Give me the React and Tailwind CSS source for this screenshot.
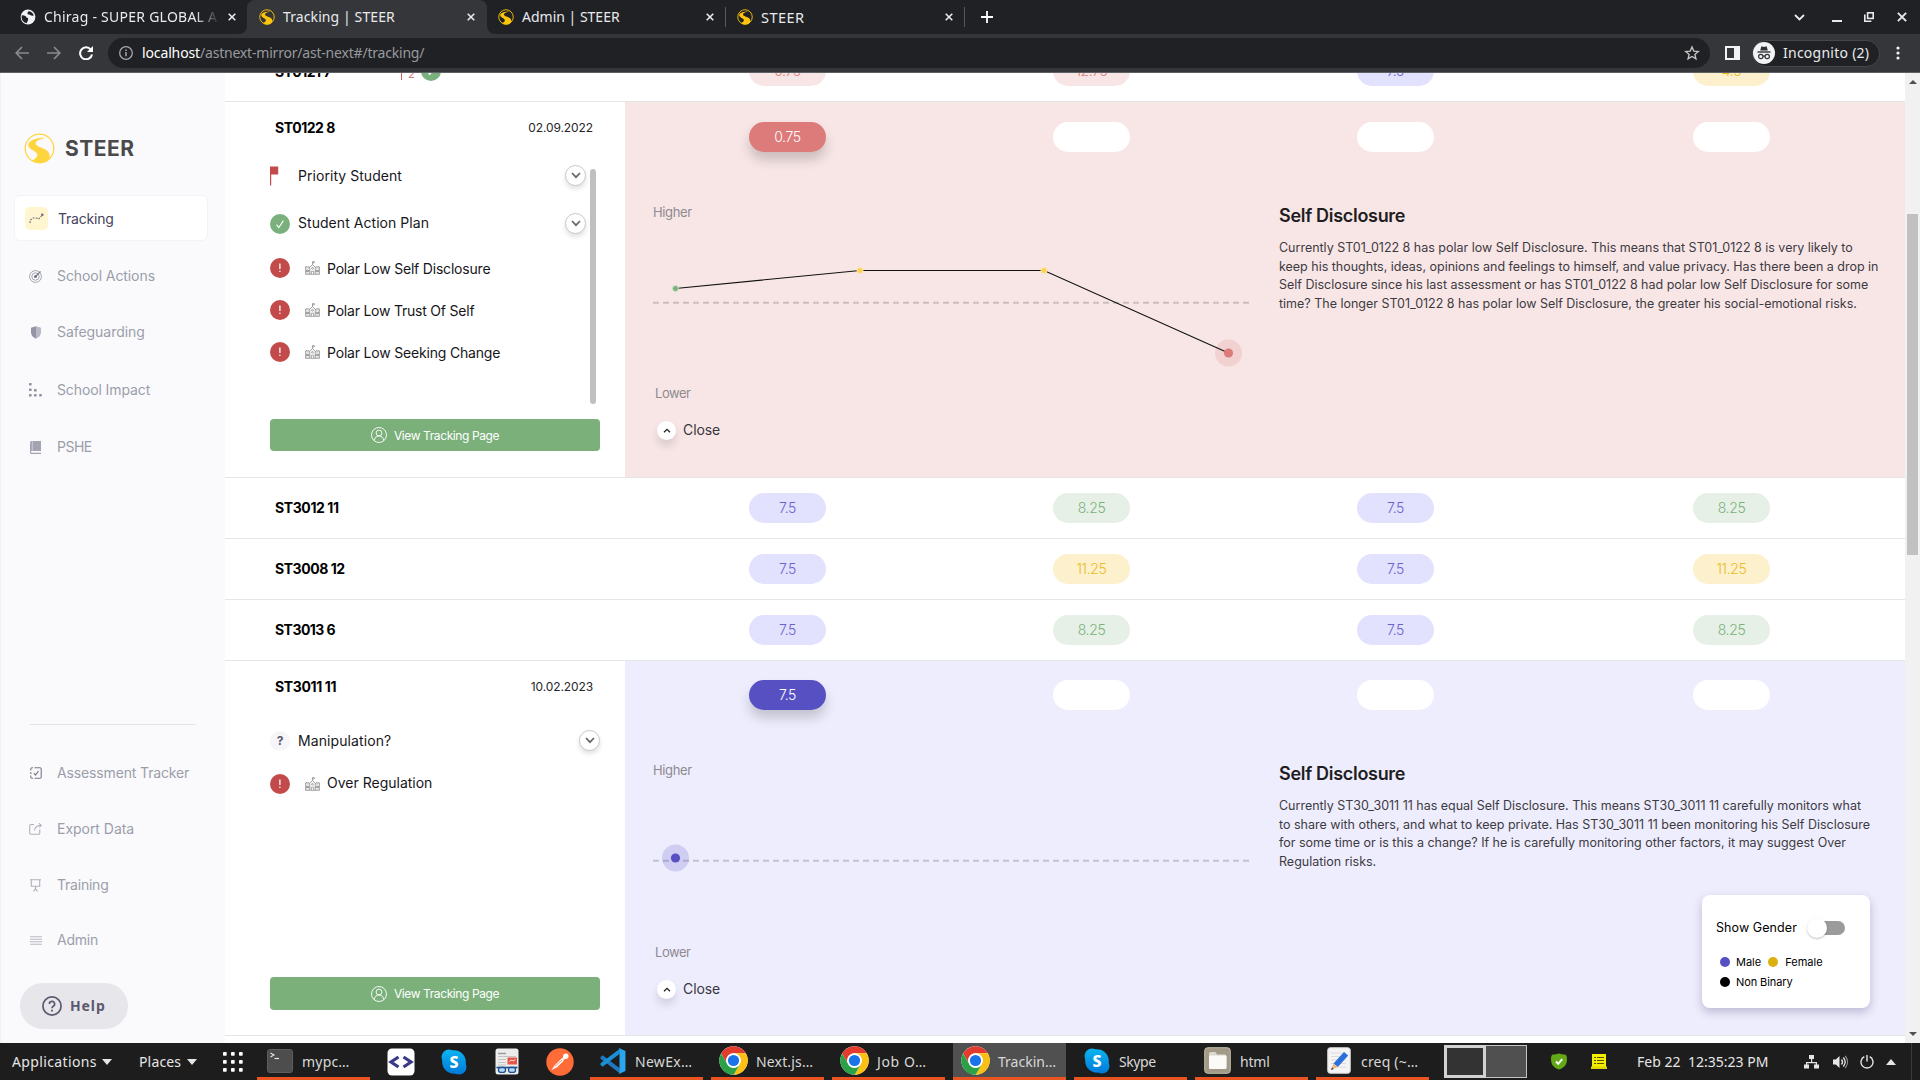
import React from "react";

/* ---------- Icons ---------- */

function SteerLogo({ size, color, stroke }) {
  return (
    <svg width={size} height={size} viewBox="0 0 32 32" className="shrink-0">
      <circle cx="16" cy="16" r={15.4 - stroke / 2} fill="none" stroke={color} strokeWidth={stroke} />
      <path
        d="M22.500 5C15 4.800 6.500 6.800 4.600 11.200C3.400 15 7.500 17 11 19C15.600 21.800 14.500 25 8 28.400C12.500 31.600 19.500 31.800 24 29.200C28 25.500 27.400 20 22 17C17.500 14.600 11.400 13.600 12 10.400C12.600 7.600 17.500 6.200 22.500 5Z"
        fill={color}
      />
    </svg>
  );
}

const X = ({ size = 8, w = 1.6 }) => (
  <svg width={size} height={size} viewBox="0 0 8 8" className="shrink-0" stroke="#e8eaed" strokeWidth={w}>
    <path d="M.7.7l6.600 6.600M7.300.7L.7 7.300" />
  </svg>
);

const GlobeIcon = () => (
  <svg width="16" height="16" viewBox="0 0 16 16" className="shrink-0">
    <circle cx="8" cy="8" r="7.400" fill="#f1f3f4" />
    <path d="M1.800 6.200C4.500 6 6.600 7 6.400 8.600c1.600.2 2.200 1.200 1.600 2.600L6.600 14.200C3 13.400 1 10 1.800 6.200zM8.400 2.200c2.800.2 4.600 1.600 5.400 4.200-2 .8-3.400.2-4-.8-1 .2-2.600-.4-2.400-1.600z" fill="#202124" />
  </svg>
);

const StarIcon = () => (
  <svg width="16" height="16" viewBox="0 0 24 24" fill="none" stroke="#c4c7c5" strokeWidth="2" className="ml-auto">
    <path d="M12 3l2.700 6.200 6.700.6-5.100 4.400 1.600 6.600-5.900-3.600-5.900 3.600 1.600-6.600L2.600 9.800l6.700-.6z" />
  </svg>
);

const Chrome = () => (
  <svg width="29" height="29" viewBox="0 0 48 48">
    <circle cx="24" cy="24" r="23.500" fill="#fff" />
    <path d="M24 12h20.350A23.500 23.500 0 0 0 3.650 12.250L13.600 30A12 12 0 0 1 24 12z" fill="#e33b2e" />
    <path d="M34.400 30L24.300 47.500A23.500 23.500 0 0 0 44.350 12H24a12 12 0 0 1 10.400 18z" fill="#fcc015" />
    <path d="M13.600 30L3.650 12.250A23.500 23.500 0 0 0 24.300 47.500L34.400 30a12 12 0 0 1-20.800 0z" fill="#2aa147" />
    <circle cx="24" cy="24" r="11.800" fill="#fff" />
    <circle cx="24" cy="24" r="9.300" fill="#1a73e8" />
  </svg>
);

const Skype = () => (
  <svg width="26" height="26" viewBox="0 0 26 26">
    <defs>
      <linearGradient id="sky" x1="0" y1="0" x2="0" y2="26" gradientUnits="userSpaceOnUse">
        <stop offset="0" stopColor="#0cb6f2" />
        <stop offset="1" stopColor="#0078d7" />
      </linearGradient>
    </defs>
    <g fill="url(#sky)">
      <circle cx="8" cy="8" r="7.500" />
      <circle cx="18" cy="18" r="7.500" />
      <circle cx="13" cy="13" r="11.800" />
    </g>
    <text x="13" y="18.800" textAnchor="middle" fontFamily="Noto Sans, sans-serif" fontWeight="800" fontSize="16" fill="#fff">S</text>
  </svg>
);

const VSCode = () => (
  <svg width="26" height="26" viewBox="0 0 100 100">
    <path d="M2 35l8-7 66 50v19L2 41z" fill="#2079c0" />
    <path d="M2 65l8 7 66-50V3L2 59z" fill="#1b8fd6" />
    <path d="M75 1l23 11v76L75 99c-2 0-4-1-5-3 3 2 5 0 5-3V7c0-3-2-5-5-3 1-2 3-3 5-3z" fill="#2aa5ee" />
  </svg>
);

const TermIcon = () => (
  <svg width="26" height="24" viewBox="0 0 26 24">
    <rect x=".5" y=".5" width="25" height="23" rx="2.500" fill="#4d4d4d" stroke="#5e5e5e" />
    <path d="M3.500 4l3.500 2-3.500 2" fill="none" stroke="#e8e8e8" strokeWidth="1.100" />
    <path d="M7.500 9.500h4.500" stroke="#e8e8e8" strokeWidth="1.200" />
  </svg>
);

const CodeIcon = () => (
  <svg width="28" height="28" viewBox="0 0 28 28">
    <rect x=".5" y=".5" width="27" height="27" rx="4.500" fill="#fff" />
    <path d="M11.500 9L4 14l7.500 5M16.500 9L24 14l-7.500 5" fill="none" stroke="#3b3a86" strokeWidth="3.200" />
  </svg>
);

const DocIcon = () => (
  <svg width="24" height="27" viewBox="0 0 24 27">
    <rect x=".5" y=".5" width="23" height="26" rx="2.500" fill="#ececec" />
    <path d="M3 5.500h8" stroke="#999" strokeWidth="1.400" />
    <path d="M3 8.500h18M3 11.500h8M3 14.500h8M3 17h8" stroke="#c4c4c4" strokeWidth="1" />
    <rect x="12.500" y="9.500" width="9.500" height="7" fill="#e95448" />
    <path d="M14.500 13.500c2-3 4 1 5.500-2" fill="none" stroke="#fff" strokeWidth="1" />
    <path d="M1.500 19.500h21" stroke="#1d4f8c" strokeWidth="1.600" />
    <rect x="3.500" y="19.500" width="7" height="4.800" rx="2" fill="#b9d7f2" stroke="#1d4f8c" strokeWidth="1.300" />
    <rect x="13.500" y="19.500" width="7" height="4.800" rx="2" fill="#b9d7f2" stroke="#1d4f8c" strokeWidth="1.300" />
  </svg>
);

const Postman = () => (
  <svg width="28" height="28" viewBox="0 0 28 28">
    <circle cx="14" cy="14" r="13.700" fill="#ff6c37" />
    <path d="M5.500 22l3-4.500 7-7 2.300 2.200-6.800 6.500z" fill="#fff" />
    <circle cx="19.800" cy="8.200" r="2.700" fill="#fff" />
    <path d="M16 12l2.500-2.500" stroke="#fff" strokeWidth="2.200" />
    <path d="M9 18.500l7-6.500" stroke="#ff6c37" strokeWidth=".7" />
  </svg>
);

const FolderIcon = () => (
  <svg width="27" height="27" viewBox="0 0 27 27">
    <rect x=".7" y=".7" width="25.600" height="25.600" rx="3" fill="#a29a86" stroke="#c3bca9" />
    <path d="M5 6.500a1.500 1.500 0 0 1 1.500-1.500h5l1.500 2.500h8a1.500 1.500 0 0 1 1.500 1.500v11.500a1.500 1.500 0 0 1-1.500 1.500h-14.500a1.500 1.500 0 0 1-1.500-1.500z" fill="#dcd8ce" />
    <rect x="5" y="8.500" width="17.500" height="13.500" rx="1.500" fill="#fbfaf8" />
  </svg>
);

const PencilIcon = () => (
  <svg width="24" height="27" viewBox="0 0 24 27">
    <rect x=".7" y=".7" width="22.600" height="25.600" rx="2.500" fill="#f4f4f4" stroke="#cfcfcf" />
    <path d="M4 6h15M4 9.500h15M4 13h15M4 16.500h15M4 20h15" stroke="#d8d8d8" strokeWidth=".9" />
    <path d="M6.500 16.500L17 5l4.200 3.600L10.800 20z" fill="#2c6fdb" />
    <path d="M6.500 16.500l4.300 3.500L4 23z" fill="#e8b98a" />
    <path d="M4 23l1-2.600 1.700 1.500z" fill="#333" />
  </svg>
);

const SchoolIcon = () => (
  <svg width="15" height="14" viewBox="0 0 15 14" className="shrink-0">
    <path d="M1 6h3.500V13H1zM10.500 6H14v7h-3.500z" fill="#e4e4e4" />
    <g fill="none" stroke="#8d8d8d" strokeWidth=".8">
      <path d="M.6 13V5.800h3.500M14.400 13V5.800h-3.500M.3 13.300h14.400M3.800 7L7.500 3.600 11.200 7M4.800 13V6.500M10.200 13V6.500M7.500 3.600V.6h1.800v1.300H7.500" />
      <path d="M6.300 13v-2.800h2.400V13" />
      <circle cx="7.500" cy="7.300" r=".9" />
    </g>
    <path d="M1 9.200h3.500v1.600H1zM10.500 9.200H14v1.600h-3.500z" fill="#8f8f8f" />
  </svg>
);

const UserIcon = () => (
  <svg width="16" height="16" viewBox="0 0 16 16" fill="none" stroke="#fff" strokeWidth=".9" className="shrink-0">
    <circle cx="8" cy="8" r="7.500" />
    <circle cx="8" cy="6" r="2.900" />
    <path d="M3.300 13.600c.3-3 2-4.600 4.700-4.600s4.400 1.600 4.700 4.600" />
  </svg>
);

const CheckCircle = () => (
  <svg width="20" height="20" viewBox="0 0 20 20" className="shrink-0">
    <circle cx="10" cy="10" r="10" fill="#79b07b" />
    <path d="M6.500 10.600l2.300 3 4.600-7" fill="none" stroke="#fff" strokeWidth="1.100" />
  </svg>
);

const Alert = () => (
  <svg width="20" height="20" viewBox="0 0 20 20" className="shrink-0">
    <circle cx="10" cy="10" r="10" fill="#c34a4a" />
    <path d="M9.900 5.500v5.600" stroke="#fff" strokeWidth="1.300" />
    <circle cx="9.900" cy="13.300" r=".8" fill="#fff" />
  </svg>
);

const Flag = () => (
  <svg width="20" height="20" viewBox="0 0 20 20" className="shrink-0">
    <path d="M0 .500h8.200v8H1.200V19.500H0z" fill="#c34a4a" />
  </svg>
);

const ChevronButton = () => (
  <div className="ml-auto flex size-[21px] items-center justify-center rounded-full border border-[#c9c9c9] bg-white shadow-[0_3px_5px_rgba(0,0,0,0.12)]">
    <svg width="10" height="7" viewBox="0 0 10 7" fill="none" stroke="#666" strokeWidth="1.700">
      <path d="M1 1l4 4.200L9 1" />
    </svg>
  </div>
);

/* ---------- Browser chrome ---------- */

const TABS = [
  { title: "Tracking | STEER", cls: "tracking-[0.1px]" },
  { title: "Admin | STEER", cls: "" },
  { title: "STEER", cls: "text-[14.5px] tracking-[0.45px]" },
];

function TabStrip() {
  return (
    <div className="flex h-[34px] items-center bg-[#202124] text-[14px] leading-[20px] text-[#e8eaed]">
      <div className="flex h-full w-[247px] items-center pl-[20px] pr-[11px]">
        <GlobeIcon />
        <div className="ml-[8px] w-[176px] overflow-hidden whitespace-nowrap tracking-[0.25px] [mask-image:linear-gradient(to_right,#000_86%,transparent)]">
          Chirag - SUPER GLOBAL A
        </div>
        <div className="ml-auto"><X /></div>
      </div>
      {TABS.map((t, i) => (
        <div
          key={t.title}
          className={
            i === 0
              ? "relative flex h-full w-[240px] items-center rounded-t-[8px] bg-[#35363a] pl-[12px] pr-[12px]"
              : "flex h-full w-[239px] items-center pl-[11px]"
          }
        >
          {i === 0 && (
            <>
              <svg width="8" height="8" className="absolute -left-[8px] bottom-0"><path d="M8 0v8H0a8 8 0 0 0 8-8z" fill="#35363a" /></svg>
              <svg width="8" height="8" className="absolute -right-[8px] bottom-0"><path d="M0 0v8h8a8 8 0 0 1-8-8z" fill="#35363a" /></svg>
            </>
          )}
          <SteerLogo size={16} color="#fcc50b" stroke={1.8} />
          <div className={"ml-[8px] whitespace-nowrap " + t.cls}>{t.title}</div>
          <div className="ml-auto"><X /></div>
          {i > 0 && <div className="ml-[11px] h-[20px] w-px bg-[#56585c]" />}
        </div>
      ))}
      <svg width="12" height="12" viewBox="0 0 12 12" className="ml-[16px]" stroke="#fff" strokeWidth="1.800"><path d="M6 0v12M0 6h12" /></svg>
      <div className="ml-auto flex items-center">
        <svg width="11" height="7" viewBox="0 0 11 7" fill="none" stroke="#e8eaed" strokeWidth="1.800"><path d="M1 1l4.500 4.500L10 1" /></svg>
        <div className="ml-[27px] mt-[8px] h-[2px] w-[10px] bg-[#e8eaed]" />
        <svg width="10" height="10" viewBox="0 0 10 10" fill="none" stroke="#e8eaed" className="ml-[22px]">
          <rect x="3.600" y=".8" width="5.600" height="5.600" strokeWidth="1.600" />
          <path d="M.8 2.500v6.700h6.600" strokeWidth="1.600" />
        </svg>
        <div className="ml-[23px] mr-[13px]"><X size={10} w={1.5} /></div>
      </div>
    </div>
  );
}

function Toolbar() {
  return (
    <div className="flex h-[39px] items-center border-b border-[#5f6063] bg-[#35363a] text-[14px] leading-[20px]">
      <svg width="14" height="14" viewBox="0 0 14 14" fill="none" stroke="#888a8d" strokeWidth="1.700" className="ml-[15px]"><path d="M14 7H1.500M7 1L1.200 7 7 13" /></svg>
      <svg width="14" height="14" viewBox="0 0 14 14" fill="none" stroke="#888a8d" strokeWidth="1.700" className="ml-[18px]"><path d="M0 7h12.500M7 1l5.800 6L7 13" /></svg>
      <svg width="14" height="14" viewBox="0 0 14 14" className="ml-[18px]">
        <path d="M11.800 3.600A6 6 0 1 0 13 8.500" fill="none" stroke="#fff" strokeWidth="2" />
        <path d="M14 0v6H8z" fill="#fff" />
      </svg>
      <div className="ml-[15px] flex h-[30px] w-[1602px] items-center rounded-full bg-[#202124] pl-[11px] pr-[10px]">
        <svg width="14" height="14" viewBox="0 0 14 14" fill="none" stroke="#a5a8ac">
          <circle cx="7" cy="7" r="6.300" strokeWidth="1.300" />
          <path d="M7 6v4.300M7 3.400v1.500" strokeWidth="1.500" />
        </svg>
        <span className="ml-[9px] tracking-[-0.13px] text-white">localhost</span>
        <span className="tracking-[-0.2px] text-[#979a9e]">/astnext-mirror/ast-next#/tracking/</span>
        <StarIcon />
      </div>
      <svg width="15" height="14" viewBox="0 0 15 14" className="ml-[15px]"><path d="M0 0h15v14H0zM2 2v10h7V2z" fill="#f1f3f4" fillRule="evenodd" /></svg>
      <div className="ml-[12px] flex h-[27px] w-[128px] items-center rounded-full border border-[#46474b] bg-[#202124]">
        <svg width="22" height="22" viewBox="0 0 22 22" className="shrink-0">
          <circle cx="11" cy="11" r="11" fill="#f1f3f4" />
          <path d="M7.200 8.500l1.200-4.200 2.600.6 2.600-.6 1.200 4.200z" fill="#303134" />
          <path d="M4.500 10h13" stroke="#303134" strokeWidth="1.400" />
          <g fill="none" stroke="#303134" strokeWidth="1.200"><circle cx="7.800" cy="14.500" r="2.200" /><circle cx="14.200" cy="14.500" r="2.200" /><path d="M10 14.200h2" /></g>
        </svg>
        <span className="ml-[8px] whitespace-nowrap tracking-[0.25px] text-[#e8eaed]">Incognito (2)</span>
      </div>
      <svg width="4" height="14" viewBox="0 0 4 14" fill="#f1f3f4" className="ml-[16px]"><circle cx="2" cy="2" r="1.600" /><circle cx="2" cy="7" r="1.600" /><circle cx="2" cy="12" r="1.600" /></svg>
    </div>
  );
}

/* ---------- Sidebar ---------- */

const TargetIcon = () => (
  <svg width="13" height="13" viewBox="0 0 13 13" fill="none" stroke="#9b9bab" strokeWidth=".9">
    <circle cx="6.500" cy="6.500" r="5.900" /><circle cx="6.500" cy="6.500" r="3.700" /><circle cx="6.500" cy="6.500" r="1.600" fill="#77778c" stroke="none" /><path d="M6.500 6.500l5-5" stroke="#77778c" strokeWidth="1.100" />
  </svg>
);
const ShieldIcon = () => (
  <svg width="12" height="13" viewBox="0 0 12 13">
    <path d="M6 .300l5 1.500v4.500c0 3-2 5.200-5 6.400z" fill="#b9b9c6" /><path d="M6 .300L1 1.800v4.500c0 3 2 5.200 5 6.400z" fill="#9494a6" />
  </svg>
);
const DotsIcon = () => (
  <svg width="13" height="14" viewBox="0 0 13 14" fill="#8f8fa3">
    <rect x="0" y="0" width="2.600" height="2.600" rx=".6" /><rect x="0" y="5.500" width="2.600" height="2.600" rx=".6" /><rect x="0" y="11" width="2.600" height="2.600" rx=".6" /><rect x="5" y="6" width="2.600" height="2.600" rx=".6" /><rect x="5" y="11" width="2.600" height="2.600" rx=".6" /><rect x="10.200" y="11" width="2.600" height="2.600" rx=".6" />
  </svg>
);
const BookIcon = () => (
  <svg width="11" height="13" viewBox="0 0 11 13">
    <path d="M1.500 0H11v10H1.800a.8.800 0 0 0 0 1.700H11V13H1.500A1.500 1.500 0 0 1 0 11.500v-10A1.500 1.500 0 0 1 1.500 0z" fill="#a3a3b2" /><path d="M2.300 0v10" stroke="#d5d5de" strokeWidth=".8" />
  </svg>
);
const CheckboxIcon = () => (
  <svg width="12" height="12" viewBox="0 0 12 12" fill="none" stroke="#77778c">
    <path d="M4.500.8H10A1.200 1.200 0 0 1 11.200 2v8A1.200 1.200 0 0 1 10 11.200H4.500M3 .8H2A1.200 1.200 0 0 0 .8 2v1.500M.8 5v2M.8 8.500V10A1.200 1.200 0 0 0 2 11.200h1" strokeWidth="1.100" /><path d="M3.800 6.200l1.700 1.800 3-4" strokeWidth="1.200" />
  </svg>
);
const ExportIcon = () => (
  <svg width="13" height="12" viewBox="0 0 13 12" fill="none" stroke="#b0b0bd" strokeWidth="1.100">
    <path d="M5 1.500H2A1.300 1.300 0 0 0 .7 2.800v7A1.300 1.300 0 0 0 2 11.200h7.500a1.300 1.300 0 0 0 1.300-1.300V6.500M5.500 7.500C6 4 8 2.500 12 2.300M10 .300l2.300 2L10.300 4.500" />
  </svg>
);
const BoardIcon = () => (
  <svg width="11" height="13" viewBox="0 0 11 13" fill="none" stroke="#b0b0bd" strokeWidth="1.100">
    <path d="M0 .800h11M1.300.800v6.500h8.400V.800M5.500 7.500V10M3.500 12.300l2-2.500 2 2.500" />
  </svg>
);
const LinesIcon = () => (
  <svg width="12" height="9" viewBox="0 0 12 9" stroke="#b9b9c4" strokeWidth="1.100"><path d="M0 .800h12M0 3.200h12M0 5.700h12M0 8.200h12" /></svg>
);

const NAV_TOP = [
  { label: "School Actions", icon: <TargetIcon />, cls: "mt-[25px] tracking-[-0.08px]" },
  { label: "Safeguarding", icon: <ShieldIcon />, cls: "mt-[36px] tracking-[-0.05px]" },
  { label: "School Impact", icon: <DotsIcon />, cls: "mt-[38px] tracking-[-0.11px]" },
  { label: "PSHE", icon: <BookIcon />, cls: "mt-[37px] tracking-[-0.5px]" },
];
const NAV_BOTTOM = [
  { label: "Assessment Tracker", icon: <CheckboxIcon />, cls: "mt-[38px] tracking-[-0.14px]" },
  { label: "Export Data", icon: <ExportIcon />, cls: "mt-[36px] tracking-[-0.03px]" },
  { label: "Training", icon: <BoardIcon />, cls: "mt-[36px] tracking-[-0.22px]" },
  { label: "Admin", icon: <LinesIcon />, cls: "mt-[35px] tracking-[-0.24px]" },
];

const NavItem = ({ label, icon, cls }) => (
  <div className={"flex h-[20px] items-center text-[14px] leading-[20px] text-[#9a9eab] " + cls}>
    <div className="ml-[26px] flex w-[17px] justify-center">{icon}</div>
    <span className="ml-[13px] whitespace-nowrap">{label}</span>
  </div>
);

function Sidebar() {
  return (
    <div className="flex h-full w-[225px] shrink-0 flex-col border-l border-[#f1f1f4] bg-[#fafafc]">
      <div className="ml-[23px] mt-[60px] flex h-[31px] items-center">
        <SteerLogo size={31} color="#ffd53f" stroke={1.3} />
        <span className="ml-[10px] text-[21px] leading-[30px] font-bold tracking-[0.5px] text-[#4a4a4a]">STEER</span>
      </div>
      <div className="ml-[13px] mt-[31px] flex h-[46px] w-[194px] items-center rounded-[6px] border border-[#f3f3f6] bg-white">
        <div className="ml-[10px] flex size-[23px] items-center justify-center rounded-[5px] bg-[#fff6d0]">
          <svg width="15" height="11" viewBox="0 0 15 11" fill="none" stroke="#6b6878" strokeWidth="1.200"><path d="M1 10V7.500L3.500 5h4l2 1.200L12.500 3" strokeDasharray="1.800 1.300" /><circle cx="13.300" cy="1.800" r=".7" /></svg>
        </div>
        <span className="ml-[10px] mt-px text-[14px] leading-[20px] tracking-[-0.2px] text-[#45425b]">Tracking</span>
      </div>
      {NAV_TOP.map((n) => <NavItem key={n.label} {...n} />)}
      <div className="ml-[29px] mt-[267px] h-px w-[166px] shrink-0 bg-[#e2e2e7]" />
      {NAV_BOTTOM.map((n) => <NavItem key={n.label} {...n} />)}
      <div className="ml-[19px] mt-[33px] flex h-[46px] w-[108px] shrink-0 items-center rounded-full bg-[#e7e6eb] text-[#5b5970]">
        <svg width="20" height="20" viewBox="0 0 20 20" fill="none" stroke="currentColor" className="ml-[22px]">
          <circle cx="10" cy="10" r="9.100" strokeWidth="1.700" />
          <path d="M7.400 7.900a2.600 2.600 0 1 1 3.800 2.300c-.9.500-1.200.9-1.200 2" strokeWidth="1.700" />
          <path d="M10 13.700v1.800" strokeWidth="1.800" />
        </svg>
        <span className="ml-[8px] font-['Noto_Sans',sans-serif] text-[14px] leading-[20px] font-bold tracking-[0.9px]">Help</span>
      </div>
    </div>
  );
}

/* ---------- Tracking table ---------- */

const TONES = {
  red: "bg-[#f8e6e6] text-[#dd7b7b]",
  purple: "bg-[#e2e1fe] text-[#6a63cc]",
  green: "bg-[#e6f0e6] text-[#7bb17b]",
  yellow: "bg-[#fcf0cd] text-[#edba25]",
  blank: "bg-white",
  redSolid: "bg-[#dd7b7b] text-white shadow-[0_8px_12px_rgba(0,0,0,0.18)]",
  purpleSolid: "bg-[#5750c3] text-white shadow-[0_8px_12px_rgba(0,0,0,0.18)]",
};

const Pill = ({ value, tone }) => (
  <div className="flex justify-center">
    <div className={"flex h-[30px] w-[77px] items-center justify-center rounded-full text-[14px] leading-[20px] font-light tracking-[-0.35px] " + TONES[tone]}>{value}</div>
  </div>
);

const Pills = ({ cells }) => (
  <div className="grid grid-cols-[325px_283px_325px_347px]">
    {cells.map(([v, t], i) => <Pill key={i} value={v} tone={t} />)}
  </div>
);

const Row = ({ name, cls, cells }) => (
  <div className="flex h-[61px] shrink-0 items-center border-b border-[#e4e5e7]">
    <div className={"w-[400px] pl-[50px] text-[14px] leading-[20px] font-bold text-black " + cls}>{name}</div>
    <Pills cells={cells} />
  </div>
);

function Scores({ bg, first, pt, footer, children, title, lines }) {
  return (
    <div className={"w-[1280px] " + bg + " " + pt}>
      <Pills cells={[first, ["", "blank"], ["", "blank"], ["", "blank"]]} />
      <div className="flex">
        <div className="w-[654px] pl-[28px] pt-[50px]">
          <div className="text-[13px] leading-[20px] tracking-[-0.35px] text-[#8d8a90]">Higher</div>
          <svg width="620" height="161" viewBox="0 0 620 161" className="block">
            <path d="M0 80.800h597" stroke="#000" strokeOpacity=".18" strokeWidth="2" strokeDasharray="6 4" />
            {children}
          </svg>
          <div className={footer}>
            <div className="pl-[2px] text-[13px] leading-[20px] tracking-[-0.45px] text-[#8d8a90]">Lower</div>
            <div className="mt-[17px] flex items-center pl-[4px]">
              <div className="flex size-[19px] items-center justify-center rounded-full bg-white shadow-[0_6px_9px_rgba(0,0,0,0.12)]">
                <svg width="8" height="5" viewBox="0 0 8 5" fill="none" stroke="#222" strokeWidth="1.300"><path d="M1 4.300l3-3 3 3" /></svg>
              </div>
              <span className="ml-[7px] text-[14px] leading-[20px] tracking-[-0.1px] text-[#38363c]">Close</span>
            </div>
          </div>
        </div>
        <div className="whitespace-nowrap pt-[54px]">
          <div className="text-[18px] leading-[20px] font-semibold tracking-[-0.3px] text-[#1f1d22]">{title}</div>
          <div className="pt-[13px] text-[12.5px] leading-[18.67px] tracking-[-0.01px] text-[#3d3b42]">
            {lines.map((l) => <div key={l}>{l}</div>)}
          </div>
        </div>
      </div>
    </div>
  );
}

const ViewButton = ({ h }) => (
  <div className={"mt-[15px] flex w-[330px] items-center justify-center rounded-[4px] bg-[#7bb07b] font-normal text-white " + h}>
    <UserIcon />
    <span className="ml-[7px] mt-px text-[12px] leading-[20px] tracking-[-0.4px]">View Tracking Page</span>
  </div>
);

const FactorItem = ({ label, cls, text }) => (
  <div className={"flex h-[20px] items-center " + cls}>
    <Alert />
    <div className="ml-[15px]"><SchoolIcon /></div>
    <span className={"ml-[7px] whitespace-nowrap " + text}>{label}</span>
  </div>
);

function Table() {
  return (
    <div className="flex w-[1680px] flex-col bg-white">
      {/* row scrolled mostly out of view */}
      <div className="flex h-[29px] shrink-0 flex-col justify-end overflow-hidden border-b border-[#e4e5e7]">
        <div className="mb-[15px] flex h-[30px] shrink-0 items-center">
          <div className="flex w-[400px] items-center pl-[50px]">
            <span className="mt-px w-[126px] text-[14px] leading-[20px] font-bold tracking-[-0.45px] text-black">ST0121 7</span>
            <div className="mt-[-2px] h-[20px] w-px bg-[#d06060]" />
            <span className="ml-[6px] mt-[6px] text-[11px] leading-[20px] text-[#dd7b7b]">2</span>
            <div className="ml-[6px]"><CheckCircle /></div>
          </div>
          <Pills cells={[["0.75", "red"], ["12.75", "red"], ["7.5", "purple"], ["4.5", "yellow"]]} />
        </div>
      </div>

      {/* expanded: ST0122 8 */}
      <div className="flex h-[376px] shrink-0 border-b border-[#e4e5e7]">
        <div className="w-[400px] pl-[45px] pt-[16px] text-[14px] leading-[20px] text-[#17161a]">
          <div className="flex items-center justify-between pl-[5px] pr-[32px]">
            <span className="font-bold tracking-[-0.45px] text-black">ST0122 8</span>
            <span className="text-[12px] tracking-[-0.1px] text-[#26252a]">02.09.2022</span>
          </div>
          <div className="mt-[27px] flex h-[239px]">
            <div className="w-[316px]">
              <div className="flex h-[21px] items-center"><Flag /><span className="ml-[8px] tracking-[0.05px]">Priority Student</span><ChevronButton /></div>
              <div className="mt-[27px] flex h-[21px] items-center"><CheckCircle /><span className="ml-[8px] pb-px tracking-[0.05px]">Student Action Plan</span><ChevronButton /></div>
              <FactorItem label="Polar Low Self Disclosure" cls="mt-[24px]" text="pt-[2px] tracking-[-0.2px]" />
              <FactorItem label="Polar Low Trust Of Self" cls="mt-[22px]" text="pt-[2px] tracking-[-0.22px]" />
              <FactorItem label="Polar Low Seeking Change" cls="mt-[22px]" text="pt-[2px] tracking-[-0.19px]" />
            </div>
            <div className="ml-[4px] mt-[4px] w-[6px] rounded-full bg-[#c0c0c0]" />
          </div>
          <ViewButton h="h-[32px]" />
        </div>
        <Scores
          bg="bg-[#f8e6e6]"
          pt="pt-[20px]"
          footer=""
          first={["0.75", "redSolid"]}
          title="Self Disclosure"
          lines={[
            "Currently ST01_0122 8 has polar low Self Disclosure. This means that ST01_0122 8 is very likely to",
            "keep his thoughts, ideas, opinions and feelings to himself, and value privacy. Has there been a drop in",
            "Self Disclosure since his last assessment or has ST01_0122 8 had polar low Self Disclosure for some",
            "time? The longer ST01_0122 8 has polar low Self Disclosure, the greater his social-emotional risks.",
          ]}
        >
          <circle cx="575.500" cy="131" r="13.500" fill="#dd7b7b" fillOpacity=".2" />
          <path d="M22.500 66.500L207 48.500H391L575.500 131" fill="none" stroke="#111" strokeWidth="1.100" />
          <circle cx="22.500" cy="66.500" r="3" fill="#7bb17b" stroke="#cfe3cf" />
          <circle cx="207" cy="48.500" r="3" fill="#ffd24d" stroke="#fbe6b0" />
          <circle cx="391" cy="48.500" r="3" fill="#ffd24d" stroke="#fbe6b0" />
          <circle cx="575.500" cy="131" r="4.600" fill="#dd7b7b" />
        </Scores>
      </div>

      <Row name="ST3012 11" cls="tracking-[-0.4px]" cells={[["7.5", "purple"], ["8.25", "green"], ["7.5", "purple"], ["8.25", "green"]]} />
      <Row name="ST3008 12" cls="tracking-[-0.46px]" cells={[["7.5", "purple"], ["11.25", "yellow"], ["7.5", "purple"], ["11.25", "yellow"]]} />
      <Row name="ST3013 6" cls="tracking-[-0.55px]" cells={[["7.5", "purple"], ["8.25", "green"], ["7.5", "purple"], ["8.25", "green"]]} />

      {/* expanded: ST3011 11 */}
      <div className="flex h-[375px] shrink-0 border-b border-[#e4e5e7]">
        <div className="w-[400px] pl-[45px] pt-[15px] text-[14px] leading-[20px] text-[#17161a]">
          <div className="flex items-center justify-between pl-[5px] pr-[32px]">
            <span className="font-bold tracking-[-0.37px] text-black">ST3011 11</span>
            <span className="mt-px text-[12px] tracking-[-0.11px] text-[#26252a]">10.02.2023</span>
          </div>
          <div className="mt-[33px] h-[232px] w-[330px]">
            <div className="flex h-[21px] items-center">
              <div className="flex size-[20px] items-center justify-center rounded-full bg-[#f6f6f9] text-[12px] font-bold text-[#5b5970]">?</div>
              <span className="ml-[8px] tracking-[0.1px]">Manipulation?</span>
              <ChevronButton />
            </div>
            <FactorItem label="Over Regulation" cls="mt-[23px]" text="pb-[2px]" />
          </div>
          <ViewButton h="h-[33px]" />
        </div>
        <Scores
          bg="bg-[#eeedfd]"
          pt="pt-[19px]"
          footer="pt-px"
          first={["7.5", "purpleSolid"]}
          title="Self Disclosure"
          lines={[
            "Currently ST30_3011 11 has equal Self Disclosure. This means ST30_3011 11 carefully monitors what",
            "to share with others, and what to keep private. Has ST30_3011 11 been monitoring his Self Disclosure",
            "for some time or is this a change? If he is carefully monitoring other factors, it may suggest Over",
            "Regulation risks.",
          ]}
        >
          <circle cx="22.500" cy="78" r="13.500" fill="#5750c3" fillOpacity=".2" />
          <circle cx="22.500" cy="78" r="4.600" fill="#5750c3" />
        </Scores>
      </div>
    </div>
  );
}

function Scrollbar() {
  return (
    <div className="flex w-[15px] flex-col items-center bg-[#f1f1f1]">
      <svg width="8" height="5" className="mt-[6px] shrink-0"><path d="M0 5l4-4 4 4z" fill="#505050" /></svg>
      <div className="mt-[130px] h-[341px] w-[11px] bg-[#c1c1c1]" />
      <svg width="8" height="5" className="mb-[6px] mt-auto shrink-0"><path d="M0 0l4 4 4-4z" fill="#505050" /></svg>
    </div>
  );
}

function GenderCard() {
  return (
    <div className="absolute left-[1702px] top-[822px] h-[113px] w-[168px] rounded-[8px] bg-white pl-[14px] pt-[23px] text-black shadow-[0_4px_10px_rgba(40,30,90,0.25)]">
      <div className="flex h-[20px] items-center">
        <span className="text-[12.5px] leading-[20px] tracking-[0.08px]">Show Gender</span>
        <div className="relative ml-[14px] h-[14px] w-[34px] rounded-full bg-[#9b9b9b]">
          <div className="absolute -left-[4px] -top-[3px] size-[20px] rounded-full bg-white shadow-[0_1px_2px_rgba(0,0,0,0.25)]" />
        </div>
      </div>
      <div className="mt-[14px] flex items-center text-[11px] leading-[20px]">
        <div className="ml-[4px] size-[10px] rounded-full bg-[#5750c3]" />
        <span className="ml-[6px]">Male</span>
        <div className="ml-[7px] size-[10px] rounded-full bg-[#dbaf0e]" />
        <span className="ml-[7px]">Female</span>
      </div>
      <div className="flex items-center text-[11px] leading-[20px]">
        <div className="ml-[4px] size-[10px] rounded-full bg-black" />
        <span className="ml-[6px] tracking-[-0.1px]">Non Binary</span>
      </div>
    </div>
  );
}

/* ---------- Desktop panel ---------- */

const WINDOWS = [
  { label: "NewEx…", icon: <VSCode />, cls: "tracking-[0.3px]" },
  { label: "Next.js…", icon: <Chrome />, cls: "tracking-[0.16px]" },
  { label: "Job O…", icon: <Chrome />, cls: "tracking-[0.6px]" },
  { label: "Trackin…", icon: <Chrome />, cls: "", active: true },
  { label: "Skype", icon: <Skype />, cls: "tracking-[-0.4px]" },
  { label: "html", icon: <FolderIcon />, cls: "tracking-[-0.2px]" },
  { label: "creq (~…", icon: <PencilIcon />, cls: "tracking-[0.2px]" },
];

const LAUNCHERS = [
  { id: "code", icon: <CodeIcon /> },
  { id: "skype", icon: <Skype /> },
  { id: "reader", icon: <DocIcon /> },
  { id: "postman", icon: <Postman /> },
];

const Task = ({ label, icon, cls, active }) => (
  <div className={"flex h-full w-[113px] shrink-0 items-center border-b-[3px] border-[#e95420] pt-[3px] text-[#d8d8d8] " + (active ? "bg-[#505050]" : "")}>
    <div className="mb-[2px] ml-[8px] flex w-[29px] justify-center">{icon}</div>
    <span className={"ml-[8px] whitespace-nowrap " + cls}>{label}</span>
  </div>
);

const Caret = () => (
  <svg width="10" height="6" className="ml-[5px] shrink-0"><path d="M0 0h10L5 6z" fill="#e6e6e6" /></svg>
);

function Panel() {
  return (
    <div className="flex h-[37px] items-center bg-[#1d1d1d] text-[14px] leading-[20px] text-[#e6e6e6]">
      <span className="w-[97px] pl-[12px] tracking-[0.37px]">Applications</span>
      <Caret />
      <span className="ml-[27px] w-[43px] tracking-[0.15px]">Places</span>
      <Caret />
      <svg width="20" height="20" viewBox="0 0 20 20" fill="#fff" className="ml-[26px]">
        {[0, 8, 16].map((y) => [0, 8, 16].map((x) => <rect key={x + "-" + y} x={x} y={y} width="3.700" height="3.700" rx=".8" />))}
      </svg>
      <div className="ml-[14px] h-full"><Task label="mypc…" icon={<TermIcon />} cls="tracking-[0.2px]" /></div>
      <div className="ml-[4px] flex w-[216px]">
        {LAUNCHERS.map((l) => (
          <div key={l.id} className="flex w-[53px] shrink-0 items-center justify-center">{l.icon}</div>
        ))}
      </div>
      <div className="flex h-full gap-[8px]">
        {WINDOWS.map((w) => <Task key={w.label} {...w} />)}
      </div>
      <div className="ml-[15px] flex h-[33px] w-[83px]">
        <div className="w-[42px] border-[3px] border-[#d2d2d2] bg-[#333]" />
        <div className="w-[41px] border border-l-0 border-[#c4c4c4] bg-[#505050]" />
      </div>
      <svg width="16" height="17" viewBox="0 0 16 17" className="ml-[24px]">
        <path d="M2 1.500C6 1.500 7 .5 8 .5s2 1 6 1c1.500.5 2 2 2 4.500 0 5-2 8.500-8 10.500C2 14.500 0 11 0 6 0 3.500.5 2 2 1.500z" fill="#63a816" /><path d="M5 8.500l2.200 2.300 4-4.600" fill="none" stroke="#fff" strokeWidth="1.900" />
      </svg>
      <svg width="16" height="15" viewBox="0 0 16 15" className="ml-[24px]">
        <rect x="1" y="0" width="14" height="13" fill="#f4ee00" /><rect x="0" y="12.500" width="16" height="2.500" fill="#e0d800" />
        <path d="M3 3.500h2M3 6.500h2M3 9.500h2M6 3.500h7M6 6.500h7M6 9.500h7" stroke="#55510a" strokeWidth="1.200" />
      </svg>
      <span className="ml-[30px] w-[51px] whitespace-nowrap">Feb 22</span>
      <span className="w-[82px] whitespace-nowrap">12:35:23 PM</span>
      <svg width="15" height="14" viewBox="0 0 15 14" fill="#e6e6e6" className="ml-[34px]">
        <rect x="5" y="0" width="5" height="4" /><rect x="0" y="9.500" width="5" height="4" /><rect x="10" y="9.500" width="5" height="4" /><path d="M7 4v3H2v3h1.200V8.200h8.600V10H13V7H8.200V4z" />
      </svg>
      <svg width="15" height="14" viewBox="0 0 15 14" fill="#e6e6e6" className="ml-[14px]">
        <path d="M0 4.500h2.800L6.500 1v12L2.800 9.500H0z" /><path d="M8.500 4.500c1.300 1.500 1.300 3.500 0 5" fill="none" stroke="#e6e6e6" strokeWidth="1.300" /><path d="M10.300 2.500c2.300 2.700 2.300 6.300 0 9" fill="none" stroke="#e6e6e6" strokeWidth="1.300" /><path d="M12.200.800c3 3.700 3 8.700 0 12.400" fill="none" stroke="#9a9a9a" strokeWidth="1.100" />
      </svg>
      <svg width="14" height="14" viewBox="0 0 14 14" fill="none" stroke="#e6e6e6" strokeWidth="1.400" className="ml-[12px]"><path d="M4.300 1.700a6 6 0 1 0 5.400 0M7 0v6.500" /></svg>
      <svg width="10" height="6" className="ml-[12px]"><path d="M0 6h10L5 0z" fill="#e6e6e6" /></svg>
      <div className="ml-[15px] h-full w-px bg-[#3a3a3a]" />
    </div>
  );
}

export default function App() {
  return (
    <div className="h-[1080px] w-[1920px] overflow-hidden bg-white font-['Noto_Sans',sans-serif]">
      <TabStrip />
      <Toolbar />
      <div className="relative flex h-[970px] overflow-hidden font-['Inter',sans-serif]">
        <Sidebar />
        <Table />
        <Scrollbar />
        <GenderCard />
      </div>
      <Panel />
    </div>
  );
}
